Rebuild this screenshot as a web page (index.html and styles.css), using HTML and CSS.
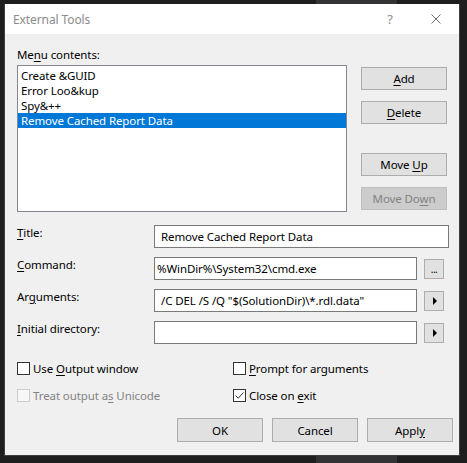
FILE: index.html
```html
<!DOCTYPE html>
<html>
<head>
<meta charset="utf-8">
<title>External Tools</title>
<link rel="stylesheet" href="styles.css">
</head>
<body>
<div class="window">
  <div class="titlebar">
    <div class="title">External Tools</div>
    <div class="cap-btn help">?</div>
    <div class="cap-btn close">
      <svg width="10" height="10" viewBox="0 0 10 10"><path d="M0.5 0.5 L9.5 9.5 M9.5 0.5 L0.5 9.5" stroke="#6f6f6f" stroke-width="1" fill="none"/></svg>
    </div>
  </div>
  <div class="content">
    <div class="top">
      <div class="list-col">
        <div class="label">Me<u>n</u>u contents:</div>
        <div class="listbox">
          <div class="item">Create &amp;GUID</div>
          <div class="item">Error Loo&amp;kup</div>
          <div class="item">Spy&amp;++</div>
          <div class="item selected">Remove Cached Report Data</div>
        </div>
      </div>
      <div class="btn-col">
        <div class="btn add"><span><u>A</u>dd</span></div>
        <div class="btn delete"><span><u>D</u>elete</span></div>
        <div class="btn moveup"><span>Move <u>U</u>p</span></div>
        <div class="btn movedown disabled"><span>Move Do<u>w</u>n</span></div>
      </div>
    </div>

    <div class="fields">
      <div class="flabel"><u>T</u>itle:</div>
      <div class="input wide pad6">Remove Cached Report Data</div>

      <div class="flabel"><u>C</u>ommand:</div>
      <div class="input">%WinDir%\System32\cmd.exe</div>
      <div class="small-btn dots">...</div>

      <div class="flabel">Ar<u>g</u>uments:</div>
      <div class="input pad6">/C DEL /S /Q "$(SolutionDir)\*.rdl.data"</div>
      <div class="small-btn"><span class="tri"></span></div>

      <div class="flabel"><u>I</u>nitial directory:</div>
      <div class="input"></div>
      <div class="small-btn"><span class="tri"></span></div>
    </div>

    <div class="checks">
      <div class="check"><span class="box"></span><span>Use <u>O</u>utput window</span></div>
      <div class="check"><span class="box"></span><span><u>P</u>rompt for arguments</span></div>
      <div class="check disabled"><span class="box"></span><span>Treat output a<u>s</u> Unicode</span></div>
      <div class="check"><span class="box checked"><svg width="11" height="11" viewBox="0 0 11 11"><path d="M1.5 5.5 L4.2 8.2 L9.5 2.5" stroke="#333" stroke-width="1" fill="none"/></svg></span><span>Close on <u>e</u>xit</span></div>
    </div>

    <div class="bottom">
      <div class="btn"><span>OK</span></div>
      <div class="btn"><span>Cancel</span></div>
      <div class="btn"><span>Appl<u>y</u></span></div>
    </div>
  </div>
</div>
</body>
</html>
```

FILE: styles.css
```css
* { box-sizing: border-box; }
html, body { margin: 0; padding: 0; }
body {
  width: 467px;
  height: 463px;
  overflow: hidden;
  background: linear-gradient(to right, #1e1e1e 316px, #333336 316px, #333336 397px, #1e1e1e 397px);
  font-family: "Noto Sans", "Segoe UI", sans-serif;
  font-size: 11.5px;
  letter-spacing: -0.1px;
  color: #000;
  padding: 4px 0 0 4px;
}
u { text-decoration: underline; text-underline-offset: 2px; text-decoration-thickness: 1px; }

.window {
  width: 456px;
  height: 452px;
  background: #f0f0f0;
  border: 1px solid #3f3f3f;
  border-top: none;
  display: flex;
  flex-direction: column;
}
.titlebar {
  height: 30px;
  background: #fff;
  display: flex;
  align-items: center;
  flex: none;
}
.title {
  flex: 1;
  padding-left: 8px;
  color: #8c8c8c;
  font-size: 12px;
}
.cap-btn {
  width: 46px;
  height: 30px;
  display: flex;
  align-items: center;
  justify-content: center;
  color: #8c8c8c;
}
.help { font-size: 13px; }

.content {
  padding: 13px 6px 0 12px;
}
.top { display: flex; }
.list-col { width: 330px; }
.label { line-height: 16px; height: 16px; }
.listbox {
  margin-top: 2px;
  height: 147px;
  background: #fff;
  border: 1px solid #828790;
  padding-top: 2px;
}
.item {
  height: 15px;
  line-height: 15px;
  padding-left: 3px;
  white-space: nowrap;
}
.item.selected { background: #0078d7; color: #fff; }

.btn-col { margin-left: 14px; width: 86px; }
.btn {
  width: 86px;
  height: 23px;
  background: #e1e1e1;
  border: 1px solid #adadad;
  display: flex;
  align-items: center;
  justify-content: center;
  white-space: nowrap;
}
.btn.disabled { background: #cccccc; border-color: #bfbfbf; color: #838383; }
.add { margin-top: 20px; }
.delete { margin-top: 11px; }
.moveup { margin-top: 29px; }
.movedown { margin-top: 11px; }

.fields {
  margin-top: 13px;
  display: grid;
  grid-template-columns: 130px 263px 20px;
  column-gap: 7px;
  grid-auto-rows: 23px;
  row-gap: 9px;
}
.flabel { grid-column: 1; line-height: 16px; white-space: nowrap; }
.input {
  grid-column: 2;
  background: #fff;
  border: 1px solid #7a7a7a;
  line-height: 21px;
  padding-left: 2px;
  white-space: nowrap;
  overflow: hidden;
}
.input.pad6 { padding-left: 6px; }
.input.wide { grid-column: 2 / 4; width: 295px; }
.small-btn {
  grid-column: 3;
  align-self: center;
  height: 20px;
  background: #e1e1e1;
  border: 1px solid #adadad;
  display: flex;
  align-items: center;
  justify-content: center;
}
.dots { font-size: 10px; line-height: 10px; align-items: flex-end; padding-bottom: 4px; letter-spacing: -0.5px; }
.tri {
  width: 0; height: 0;
  border-top: 4px solid transparent;
  border-bottom: 4px solid transparent;
  border-left: 4px solid #000;
  margin-left: 1px;
}

.checks {
  margin-top: 16px;
  display: grid;
  grid-template-columns: 216px 1fr;
  grid-auto-rows: 16px;
  row-gap: 11px;
}
.check { display: flex; align-items: center; white-space: nowrap; }
.box {
  width: 13px; height: 13px;
  border: 1px solid #333;
  background: #fff;
  margin-right: 3px;
  display: flex;
  align-items: center;
  justify-content: center;
  flex: none;
}
.check.disabled { color: #838383; }
.check.disabled .box { border-color: #cccccc; background: #f7f7f7; }

.bottom {
  margin-top: 15px;
  display: flex;
  justify-content: flex-end;
  gap: 9px;
}
.bottom .btn { height: 24px; }
```
